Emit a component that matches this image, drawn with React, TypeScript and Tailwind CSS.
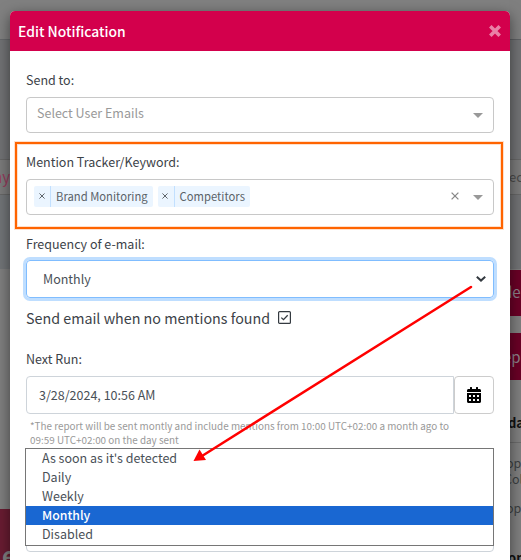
import { FaCalendarAlt } from "react-icons/fa"

const OPTIONS = ["As soon as it's detected", "Daily", "Weekly", "Monthly", "Disabled"]
const TAGS = ["Brand Monitoring", "Competitors"]

function Label({ children }: { children: string }) {
  return <div className="h-5 leading-5 text-[12.5px] whitespace-nowrap">{children}</div>
}

function Caret() {
  return (
    <svg className="w-[10px] h-[5px]" viewBox="0 0 10 5">
      <path d="M0 0h10L5 5z" fill="#999" />
    </svg>
  )
}

function Cross({ className }: { className: string }) {
  return (
    <svg className={className} viewBox="0 0 8 8" fill="none" stroke="currentColor" strokeWidth="1.3">
      <path d="M.6.6l6.800 6.800M7.400.6L.6 7.400" />
    </svg>
  )
}

function Tag({ text }: { text: string }) {
  return (
    <div className="flex h-[21px] rounded-[2px] bg-[#ebf5ff] text-[#5a6268]">
      <span className="flex w-[17px] items-center justify-center border-r border-[#c2e0ff]">
        <Cross className="w-[6px] h-[6px] -mt-px -ml-px" />
      </span>
      <span className="px-[5px] text-[11.25px] leading-[20px] whitespace-nowrap">{text}</span>
    </div>
  )
}

function Backdrop() {
  return (
    <div className="flex h-full justify-between bg-[#808080]">
      <div className="w-[12px] overflow-hidden">
        <div className="h-[39px]" />
        <div className="h-[120px] border-t border-[#66686b] bg-[#717274]" />
        <div className="h-[36px] border-y border-[#666] bg-[#7b7b7b] text-[15px] leading-[34px] text-[#963a5c]">
          <span className="-ml-[7px] block">ny</span>
        </div>
        <div className="h-[74px] bg-[#717477]" />
        <div className="h-[240px] bg-[#7f7f7f]" />
        <div className="h-[51px] bg-[#691c32] pt-[31px]">
          <span className="ml-[2px] block text-[24px] leading-[30px] font-bold text-[#808080]">e</span>
        </div>
      </div>
      <div className="w-[12px] overflow-hidden bg-[#7f7f7f] whitespace-nowrap">
        <div className="h-[39px]" />
        <div className="h-[120px] border-t border-[#5e6063] bg-[#717274]" />
        <div className="h-[36px] border-y border-[#666] bg-[#7b7b7b] text-[13px] leading-[34px] text-[#4a4a4a]">ec</div>
        <div className="h-[74px] bg-[#717274]" />
        <div className="mt-px h-[46px] bg-[#6a0026] text-[15px] leading-[43px] text-[#8a8088]">
          <div className="-ml-[6px]">de</div>
        </div>
        <div className="mt-[17px] h-[47px] bg-[#6a0026] text-[15px] leading-[47px] text-[#8a8088]">
          <div className="-ml-[6px]">ep</div>
        </div>
        <div className="h-[63px] border-b border-[#6b6b6b]">
          <div className="-ml-[1px] pt-[32px] text-[13px] leading-[22px] font-bold text-[#111]">da</div>
        </div>
        <div className="-ml-[3px] pt-[12px] text-[12.5px] leading-[16px] text-[#3c3f42]">
          <div>op</div>
          <div className="-ml-[2px]">Col</div>
          <div className="mt-[13px]">op</div>
        </div>
        <div className="-ml-[1px] mt-[32px] text-[13px] leading-[20px] font-bold text-[#111]">on</div>
      </div>
    </div>
  )
}

function FrequencyMenu() {
  return (
    <div className="absolute top-[437px] left-[15px] h-[98px] w-[469px] border border-[#767676] bg-white">
      {OPTIONS.map((option) => (
        <div
          key={option}
          className={
            option === "Monthly"
              ? "h-[19px] bg-[#1967d2] pl-4 text-[12.3px] leading-[18px] font-medium text-white"
              : "h-[19px] pl-4 text-[12.5px] leading-[18px] text-[#495057]"
          }
        >
          {option}
        </div>
      ))}
    </div>
  )
}

function Arrow() {
  return (
    <svg className="absolute inset-0" width="521" height="560" viewBox="0 0 521 560">
      <path d="M471 287L202 456" stroke="#f00" strokeWidth="2.500" strokeLinecap="round" />
      <path d="M193.500 461L199.500 449.500L206 460z" fill="#f00" />
    </svg>
  )
}

export default function App() {
  return (
    <div className="relative h-[560px] w-[521px] overflow-hidden font-['Noto_Sans_CJK_SC',sans-serif] text-[#3c4248]">
      <Backdrop />

      <div className="absolute top-[11px] left-[10px] h-[560px] w-[500px] rounded-t-[5px] bg-white shadow-[0_4px_14px_rgba(0,0,0,0.5)]">
        <div className="flex h-10 items-center justify-between rounded-t-[5px] bg-[#d3004c] pr-[9px] pl-[8px] text-white">
          <span className="text-[13.9px] leading-5 font-medium">Edit Notification</span>
          <svg className="w-3 h-3 text-[#ea80a6]" viewBox="0 0 12 12" stroke="currentColor" strokeWidth="3.6">
            <path d="M1.300 1.300l9.400 9.400M10.700 1.300l-9.400 9.400" />
          </svg>
        </div>

        <div className="px-4 pt-[19px]">
          <Label>Send to:</Label>
          <div className="mt-[7px] flex h-9 items-center justify-between rounded-[4px] border border-[#c8c8c8] pr-[10px] pl-[10px]">
            <span className="-mt-[4px] text-[12.5px] leading-5 text-[#999]">Select User Emails</span>
            <Caret />
          </div>

          <div className="mt-[19px]">
            <Label>Mention Tracker/Keyword:</Label>
          </div>
          <div className="mt-[7px] flex h-9 items-center rounded-[4px] border border-[#c8c8c8] pr-[10px] pl-[7px]">
            <div className="-mt-px flex gap-[5px]">
              {TAGS.map((tag) => (
                <Tag key={tag} text={tag} />
              ))}
            </div>
            <Cross className="mr-[14px] -mt-[3px] ml-auto w-2 h-2 text-[#888]" />
            <Caret />
          </div>

          <div className="mt-[19px]">
            <Label>Frequency of e-mail:</Label>
          </div>
          <div className="mt-[6px] flex h-[38px] items-center justify-between rounded-[4px] border border-[#80bdff] pr-[7px] pl-4 text-[#495057] shadow-[0_0_0_3px_#bfdeff]">
            <span className="text-[12.5px] leading-5">Monthly</span>
            <svg className="w-[10px] h-[6px]" viewBox="0 0 10 6" fill="none" stroke="#343a40" strokeWidth="2">
              <path d="M.8.8L5 4.600L9.200.8" />
            </svg>
          </div>

          <div className="mt-[9px] flex h-[22px] items-center">
            <span className="text-[14.3px] leading-[22px]">Send email when no mentions found</span>
            <svg className="-mt-[2px] ml-[7.500px] w-[13px] h-[13px]" viewBox="0 0 13 13" fill="none" stroke="#343a40">
              <rect x=".6" y=".6" width="11.800" height="11.800" rx="1" strokeWidth="1.200" />
              <path d="M3.300 6.600l2.200 2.100l4.200-4.500" strokeWidth="1.300" />
            </svg>
          </div>

          <div className="mt-[20px]">
            <Label>Next Run:</Label>
          </div>
          <div className="mt-[7px] flex h-[38px]">
            <div className="w-[428px] rounded-l-[4px] border border-[#ced4da] pl-3 text-[12.5px] leading-[36px] text-[#495057]">
              3/28/2024, 10:56 AM
            </div>
            <div className="flex flex-1 items-center justify-center rounded-[4px] border border-[#ccc] text-black">
              <FaCalendarAlt className="w-[14px] h-4" />
            </div>
          </div>
          <p className="mt-[5px] ml-1 text-[9.88px] leading-[14px] whitespace-nowrap text-[#999]">
            *The report will be sent montly and include mentions from 10:00 UTC+02:00 a month ago to
            <br />
            09:59 UTC+02:00 on the day sent
          </p>
          <div className="mt-[48px] h-[57px] rounded-[4px] border border-[#ced4da]" />
        </div>

        <FrequencyMenu />
      </div>

      <div className="absolute top-[142px] left-[15px] h-[87px] w-[488px] border-2 border-[#ff6400] shadow-[0_0_0_1px_#ffe0cc,inset_0_0_0_1px_#ffe0cc]" />
      <Arrow />
    </div>
  )
}
